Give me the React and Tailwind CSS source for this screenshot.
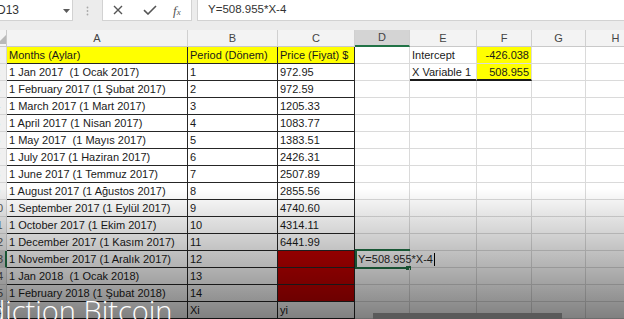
import React from "react";

const COLS = [
  { w: "w-[181px]" },
  { w: "w-[90px]" },
  { w: "w-[77px]" },
  { w: "w-[55px]" },
  { w: "w-[67px]" },
  { w: "w-[55px]" },
  { w: "w-[54px]" },
  { w: "w-[60px]" },
];

const LETTERS = ["A", "B", "C", "D", "E", "F", "G", "H"];

const DATA = [
  ["Months (Aylar)", "Period (Dönem)", "Price (Fiyat) $"],
  ["1 Jan 2017  (1 Ocak 2017)", "1", "972.95"],
  ["1 February 2017 (1 Şubat 2017)", "2", "972.59"],
  ["1 March 2017 (1 Mart 2017)", "3", "1205.33"],
  ["1 April 2017 (1 Nisan 2017)", "4", "1083.77"],
  ["1 May 2017  (1 Mayıs 2017)", "5", "1383.51"],
  ["1 July 2017 (1 Haziran 2017)", "6", "2426.31"],
  ["1 June 2017 (1 Temmuz 2017)", "7", "2507.89"],
  ["1 August 2017 (1 Ağustos 2017)", "8", "2855.56"],
  ["1 September 2017 (1 Eylül 2017)", "9", "4740.60"],
  ["1 October 2017 (1 Ekim 2017)", "10", "4314.11"],
  ["1 December 2017 (1 Kasım 2017)", "11", "6441.99"],
  ["1 November 2017 (1 Aralık 2017)", "12", ""],
  ["1 Jan 2018  (1 Ocak 2018)", "13", ""],
  ["1 February 2018 (1 Şubat 2018)", "14", ""],
  ["", "Xi", "yi"],
];

function TableCell({ col, row, children }) {
  const isHeader = row === 0;
  const isRed = col === 2 && row >= 12 && row <= 14;
  let bg = "";
  if (isHeader) bg = "bg-[#ffff00]";
  if (isRed) bg = "bg-[#c00000]";
  return (
    <div
      className={`${COLS[col].w} h-[17px] shrink-0 border-r border-b border-[#262626] ${bg} px-[2px] leading-[16px] whitespace-pre overflow-hidden`}
    >
      {children}
    </div>
  );
}

function Row({ r }) {
  const rowNum = r + 1;
  const selected = rowNum === 13;
  const cells = DATA[r];
  return (
    <div className="flex h-[17px]">
      <div
        className={`w-[7px] h-[17px] shrink-0 overflow-hidden border-b border-[#d4d4d4] ${
          selected ? "bg-[#d2d2d2] border-r-2 border-r-[#217346]" : "bg-[#f0f0f0] border-r border-r-[#d4d4d4]"
        }`}
      >
        <span className="block w-[20px] ml-[-13px] text-center leading-[16px] text-[#555]">{rowNum}</span>
      </div>
      <TableCell col={0} row={r}>{cells[0]}</TableCell>
      <TableCell col={1} row={r}>{cells[1]}</TableCell>
      <TableCell col={2} row={r}>{cells[2]}</TableCell>
      {/* D */}
      <div className="relative w-[55px] h-[17px] shrink-0 border-r border-b border-[#dadada]">
        {selected && (
          <>
            <div className="absolute left-0 top-[-2px] w-[55px] h-[20px] border-t-2 border-l-2 border-b-2 border-[#217346]" />
            <div className="absolute left-[51px] top-[15px] w-[5px] h-[4px] bg-[#217346]" />
            <div className="absolute left-[3px] top-0 z-10 whitespace-nowrap leading-[16px] flex items-center">
              <span>Y=508.955*X-4</span>
              <span className="inline-block w-[1px] h-[13px] bg-black ml-[1px]" />
            </div>
          </>
        )}
      </div>
      {/* E */}
      <div
        className={`w-[67px] h-[17px] shrink-0 border-r border-r-[#dadada] px-[2px] leading-[16px] whitespace-nowrap ${
          r === 1 ? "border-b-2 border-b-[#1a1a1a]" : "border-b border-b-[#dadada]"
        }`}
      >
        {r === 0 ? "Intercept" : r === 1 ? "X Variable 1" : ""}
      </div>
      {/* F */}
      <div
        className={`w-[55px] h-[17px] shrink-0 border-r border-r-[#dadada] px-[2px] text-right leading-[16px] whitespace-nowrap ${
          r === 0 ? "bg-[#ffff00] border-b border-b-[#dadada]" : r === 1 ? "bg-[#ffff00] border-b-2 border-b-[#1a1a1a]" : "border-b border-b-[#dadada]"
        }`}
      >
        {r === 0 ? "-426.038" : r === 1 ? "508.955" : ""}
      </div>
      <div className="w-[54px] h-[17px] shrink-0 border-r border-b border-[#dadada]" />
      <div className="w-[60px] h-[17px] shrink-0 border-r border-b border-[#dadada]" />
    </div>
  );
}

export default function App() {
  return (
    <div className="relative w-[624px] h-[319px] overflow-hidden bg-white font-['Liberation_Sans',Arial,sans-serif] text-[11px] text-[#1a1a1a]">
      {/* Formula bar area */}
      <div className="h-[30px] bg-[#ececec]">
        <div className="h-[21px] flex">
          <div className="relative w-[73px] h-[21px] bg-white border-r border-b border-[#d2d2d2] flex items-center overflow-hidden">
            <span className="ml-[-3px] text-[12px] text-[#333]">D13</span>
            <svg className="absolute left-[63px] top-[9px]" width="7" height="4" viewBox="0 0 7 4">
              <path d="M0 0H7L3.5 4Z" fill="#5a5a5a" />
            </svg>
          </div>
          <div className="w-[29px] flex items-center justify-center">
            <svg width="3" height="10" viewBox="0 0 3 10">
              <circle cx="1.5" cy="1.5" r="0.9" fill="#a8a8a8" />
              <circle cx="1.5" cy="5" r="0.9" fill="#a8a8a8" />
              <circle cx="1.5" cy="8.5" r="0.9" fill="#a8a8a8" />
            </svg>
          </div>
          <div className="w-[90px] h-[21px] bg-white border-x border-b border-[#d2d2d2] flex items-center">
            <svg className="ml-[10px]" width="10" height="10" viewBox="0 0 10 10">
              <path d="M1 1L9 9M9 1L1 9" stroke="#555" strokeWidth="1.4" />
            </svg>
            <svg className="ml-[20px]" width="14" height="10" viewBox="0 0 14 10">
              <path d="M1 5.2L5 9L13 1" stroke="#555" strokeWidth="1.6" fill="none" />
            </svg>
            <span className="ml-[16px] font-['Liberation_Serif',serif] italic text-[13px] text-[#555] leading-none">
              f<span className="text-[9px]">x</span>
            </span>
          </div>
          <div className="w-[5px]" />
          <div className="flex-1 h-[21px] bg-white border-l border-b border-[#d2d2d2] flex items-center pl-[10px] text-[11.5px] text-[#333]">
            Y=508.955*X-4
          </div>
        </div>
      </div>

      {/* Column headers */}
      <div className="flex h-[17px] bg-[#f3f3f3]">
        <div className="relative w-[7px] h-[17px] shrink-0 border-r border-b border-[#c9c9c9] overflow-hidden">
          <svg className="absolute left-[-3px] top-[4px]" width="10" height="10" viewBox="0 0 10 10">
            <path d="M10 0V10H0Z" fill="#b9b9b9" />
          </svg>
        </div>
        {COLS.map((c, i) => (
          <div
            key={i}
            className={`${c.w} h-[17px] shrink-0 border-r border-r-[#d0d0d0] flex items-center justify-center text-[#444] ${
              i === 3 ? "bg-[#d4d4d4] border-b-2 border-b-[#217346]" : "border-b border-b-[#c9c9c9]"
            }`}
          >
            {LETTERS[i]}
          </div>
        ))}
      </div>

      {/* Grid */}
      <div>
        {DATA.map((_, r) => (
          <Row key={r} r={r} />
        ))}
      </div>

      {/* Video fade overlay */}
      <div className="pointer-events-none absolute left-0 right-0 top-[188px] bottom-0 bg-linear-to-b from-black/0 to-black/50" />

      {/* Caption text overlay */}
      <div className="absolute left-[-12px] top-[296px] whitespace-nowrap font-['Open_Sans',sans-serif] font-light text-[29px] leading-[29px] text-white">
        diction Bitcoin
      </div>

      {/* Dark bar */}
      <div className="absolute left-[373px] top-[313px] w-[189px] h-[6px] bg-[#5a5a5a]" />
    </div>
  );
}
